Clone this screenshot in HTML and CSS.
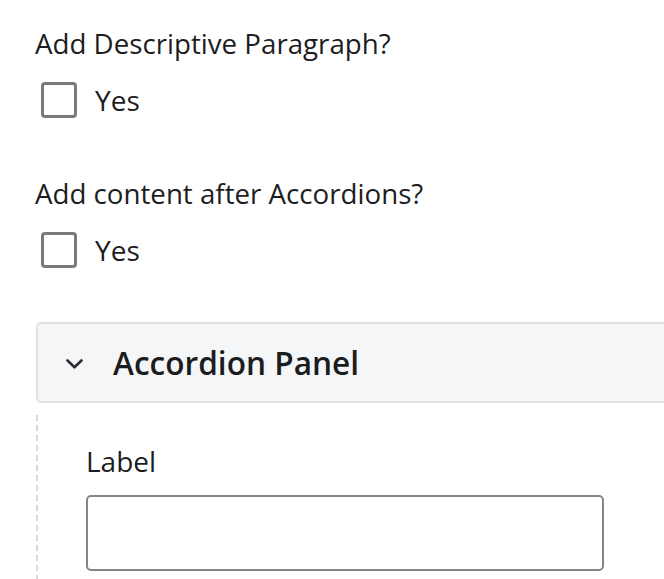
FILE: index.html
```html
<!DOCTYPE html>
<html lang="en">
<head>
<meta charset="utf-8">
<title>Accordion form</title>
<link rel="stylesheet" href="styles.css">
</head>
<body>
<main class="form">
  <section class="field">
    <div class="field-label">Add Descriptive Paragraph?</div>
    <label class="check-row">
      <span class="checkbox"></span>
      <span class="check-text">Yes</span>
    </label>
  </section>
  <section class="field">
    <div class="field-label">Add content after Accordions?</div>
    <label class="check-row">
      <span class="checkbox"></span>
      <span class="check-text">Yes</span>
    </label>
  </section>
  <section class="accordion">
    <div class="accordion-header">
      <svg class="chevron" width="17" height="10" viewBox="0 0 17 10" aria-hidden="true">
        <path d="M1.5 1.5 L8.5 8.3 L15.5 1.5" fill="none" stroke="#2b2d31" stroke-width="2.6" stroke-linecap="round" stroke-linejoin="round"/>
      </svg>
      <h2 class="accordion-title">Accordion Panel</h2>
    </div>
    <div class="accordion-body">
      <div class="input-label">Label</div>
      <div class="text-input"></div>
    </div>
  </section>
</main>
</body>
</html>
```

FILE: styles.css
```css
html, body {
  margin: 0;
  padding: 0;
  overflow: hidden;
  background: #ffffff;
}

body {
  font-family: "Open Sans", "Noto Sans", sans-serif;
  color: #1d1d1f;
  width: 664px;
  height: 579px;
}

.form {
  display: flex;
  flex-direction: column;
  padding: 24px 0 0 35px;
  height: 555px;
  overflow: hidden;
}

.field {
  display: flex;
  flex-direction: column;
  gap: 19px;
  margin-bottom: 55px;
}

.field + .field {
  margin-bottom: 53px;
}

.field-label {
  font-size: 27.7px;
  line-height: 38px;
}

.check-row {
  display: flex;
  align-items: center;
  gap: 18px;
  padding-left: 6px;
  height: 38px;
}

.checkbox {
  box-sizing: border-box;
  width: 36px;
  height: 36px;
  border: 3px solid #7b7b7d;
  border-radius: 4px;
  background: #fff;
}

.check-text {
  font-size: 28px;
  line-height: 38px;
}

.accordion {
  flex: none;
  width: 680px;
  margin-left: 1px;
}

.accordion-header {
  box-sizing: border-box;
  height: 81px;
  display: flex;
  align-items: center;
  padding-left: 28px;
  gap: 30px;
  background: #f5f6f8;
  border: 2px solid #e0e1e4;
  border-radius: 5px;
}

.chevron {
  flex: none;
  margin-top: 2px;
}

.accordion-title {
  margin: 0;
  font-size: 31.6px;
  line-height: 44px;
  font-weight: 600;
  color: #1b1c1e;
}

.accordion-body {
  margin-top: 12px;
  padding: 27px 0 0 50px;
  height: 137px;
  background-image: repeating-linear-gradient(to bottom, #d9d9d9 0 6px, transparent 6px 10px);
  background-size: 2px 100%;
  background-repeat: no-repeat;
  background-position: 0 0;
}

.input-label {
  font-size: 28px;
  line-height: 38px;
  margin-bottom: 15px;
}

.text-input {
  box-sizing: border-box;
  width: 518px;
  height: 76px;
  border: 2px solid #858585;
  border-radius: 5px;
  background: #fff;
}
```
